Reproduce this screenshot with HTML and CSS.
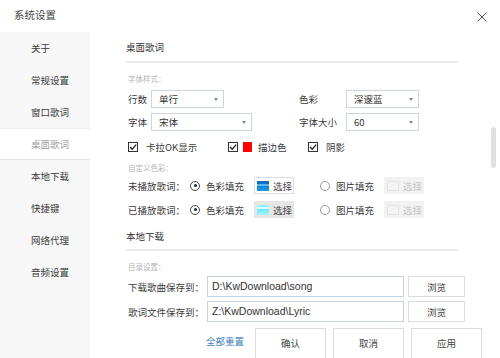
FILE: index.html
```html
<!DOCTYPE html>
<html lang="zh-CN">
<head>
<meta charset="utf-8">
<title>系统设置</title>
<link rel="stylesheet" href="styles.css">
</head>
<body>
<div class="win">
  <header class="titlebar">
    <span class="title">系统设置</span>
    <svg class="close" width="10" height="10" viewBox="0 0 10 10"><path d="M0.5 0.5 L9.5 9.5 M9.5 0.5 L0.5 9.5" stroke="#555" stroke-width="1" fill="none"/></svg>
  </header>
  <div class="body">
    <nav class="side">
      <div class="item">关于</div>
      <div class="item">常规设置</div>
      <div class="item">窗口歌词</div>
      <div class="item active">桌面歌词</div>
      <div class="item">本地下载</div>
      <div class="item">快捷键</div>
      <div class="item">网络代理</div>
      <div class="item">音频设置</div>
    </nav>
    <main class="main">
      <h2 class="sec-h">桌面歌词</h2>
      <div class="hint h1">字体样式：</div>
      <div class="row r1">
        <div class="lg"><span class="lbl">行数</span><div class="sel w73">单行<i class="arr"></i></div></div>
        <div class="rg"><span class="lbl rl">色彩</span><div class="sel w73">深邃蓝<i class="arr"></i></div></div>
      </div>
      <div class="row r2">
        <div class="lg"><span class="lbl">字体</span><div class="sel w101">宋体<i class="arr"></i></div></div>
        <div class="rg"><span class="lbl rl">字体大小</span><div class="sel w73">60<i class="arr"></i></div></div>
      </div>
      <div class="row checks">
        <div class="ck c1"><svg class="cb" width="10" height="10" viewBox="0 0 10 10"><rect x="0.5" y="0.5" width="9" height="9" fill="#fff" stroke="#333"/><path d="M2 5 L4.2 7.2 L8.2 2.6" stroke="#222" stroke-width="1.3" fill="none"/></svg><span class="ct">卡拉OK显示</span></div>
        <div class="ck c2"><svg class="cb" width="10" height="10" viewBox="0 0 10 10"><rect x="0.5" y="0.5" width="9" height="9" fill="#fff" stroke="#333"/><path d="M2 5 L4.2 7.2 L8.2 2.6" stroke="#222" stroke-width="1.3" fill="none"/></svg><span class="red"></span><span class="ct2">描边色</span></div>
        <div class="ck c3"><svg class="cb" width="10" height="10" viewBox="0 0 10 10"><rect x="0.5" y="0.5" width="9" height="9" fill="#fff" stroke="#333"/><path d="M2 5 L4.2 7.2 L8.2 2.6" stroke="#222" stroke-width="1.3" fill="none"/></svg><span class="ct">阴影</span></div>
      </div>
      <div class="hint h2">自定义色彩：</div>
      <div class="row crow cr1">
        <span class="clbl">未播放歌词：</span>
        <span class="radio on"></span><span class="rt">色彩填充</span>
        <span class="pick"><span class="sw sw1"></span>选择</span>
        <span class="radio r-2"></span><span class="rt">图片填充</span>
        <span class="pick dis"><span class="sw sw0"></span>选择</span>
      </div>
      <div class="row crow cr2">
        <span class="clbl">已播放歌词：</span>
        <span class="radio on"></span><span class="rt">色彩填充</span>
        <span class="pick act"><span class="sw sw2"></span>选择</span>
        <span class="radio r-2"></span><span class="rt">图片填充</span>
        <span class="pick dis"><span class="sw sw0"></span>选择</span>
      </div>
      <h2 class="sec-h s2">本地下载</h2>
      <div class="hint h3">目录设置：</div>
      <div class="row irow i1">
        <span class="ilbl">下载歌曲保存到：</span>
        <div class="inp">D:\KwDownload\song</div>
        <span class="btn browse">浏览</span>
      </div>
      <div class="row irow i2">
        <span class="ilbl">歌词文件保存到：</span>
        <div class="inp">Z:\KwDownload\Lyric</div>
        <span class="btn browse">浏览</span>
      </div>
      <div class="footer">
        <span class="reset">全部重置</span>
        <span class="btn fb">确认</span>
        <span class="btn fb">取消</span>
        <span class="btn fb">应用</span>
      </div>
    </main>
  </div>
  <div class="scroll"></div>
</div>
</body>
</html>
```

FILE: styles.css
```css
html, body { margin: 0; padding: 0; background: #fff; }
.win {
  width: 500px; height: 358px; overflow: hidden; position: relative;
  background: #fff; color: #3a3a3a;
  font-family: "Noto Sans CJK SC", "Liberation Sans", sans-serif;
  font-size: 9.5px; white-space: nowrap;
}
.titlebar {
  height: 32px; box-sizing: border-box;
  display: flex; justify-content: space-between; align-items: flex-start;
  padding: 7px 13px 0 14px;
}
.title { font-size: 10.5px; line-height: 16px; color: #444; }
.close { margin-top: 5px; }
.body { display: flex; height: 326px; }
.side { width: 90px; flex: none; background: #f7f7f7; }
.item { height: 32px; line-height: 32px; padding-left: 31px; box-sizing: border-box; color: #3a3a3a; }
.item.active { background: #fff; color: #a0a0a0; border-top: 1px solid #ededed; border-bottom: 1px solid #e4e4e4; line-height: 30px; }
.main { flex: 1; padding-left: 36px; display: flex; flex-direction: column; }
.sec-h {
  margin: 0; font-size: 9.5px; font-weight: normal; color: #333;
  height: 29px; line-height: 30px; width: 332px;
  border-bottom: 2px solid #e9e9e9;
}
.sec-h.s2 { margin-top: 4px; height: 27px; line-height: 28px; }
.hint { color: #b4b4b4; font-size: 7.5px; height: 16px; line-height: 16px; padding-left: 2px; }
.h1 { margin-top: 8px; }
.h2 { margin-top: 5px; }
.h3 { margin-top: 8px; }
.row { display: flex; align-items: center; padding-left: 2px; }
.r1 { margin-top: 3px; height: 18px; }
.r2 { margin-top: 5px; height: 18px; }
.lg { display: flex; align-items: center; width: 171px; }
.rg { display: flex; align-items: center; }
.lbl { width: 23px; flex: none; }
.lbl.rl { width: 47px; }
.sel {
  position: relative; box-sizing: border-box; height: 18px; line-height: 16px;
  border: 1px solid #ccd6e2; padding-left: 7px; background: #fff; color: #333; flex: none;
}
.w73 { width: 73px; }
.w101 { width: 101px; }
.arr {
  position: absolute; right: 5px; top: 7px; width: 0; height: 0;
  border-left: 2.5px solid transparent; border-right: 2.5px solid transparent;
  border-top: 3px solid #7a8896;
}
.checks { margin-top: 8px; height: 16px; }
.ck { display: flex; align-items: center; flex: none; }
.c1 { width: 100px; }
.c2 { width: 80px; }
.cb { flex: none; }
.ct { margin-left: 8px; }
.red { width: 9px; height: 10px; background: #f00; margin-left: 5px; flex: none; }
.ct2 { margin-left: 6px; }
.crow { height: 17px; }
.cr1 { margin-top: 1px; }
.cr2 { margin-top: 7px; }
.clbl { width: 62px; flex: none; }
.radio {
  width: 10px; height: 10px; box-sizing: border-box; border: 1px solid #444;
  border-radius: 50%; position: relative; flex: none; background: #fff;
}
.radio.on::after {
  content: ""; position: absolute; left: 2.5px; top: 2.5px; width: 3px; height: 3px;
  border-radius: 50%; background: #222;
}
.radio.r-2 { border-color: #999; margin-left: 26px; }
.rt { margin-left: 6px; width: 38px; flex: none; }
.pick {
  margin-left: 10px; width: 40px; height: 17px; box-sizing: border-box; flex: none;
  border: 1px solid #ddd; display: flex; align-items: center; color: #444; background: #fff;
}
.pick.act { background: #e6e6e6; border-color: #e6e6e6; }
.pick.dis { background: #f2f2f2; border-color: #f2f2f2; color: #c4c4c4; }
.sw { width: 12px; height: 10px; margin: 0 4px 0 2px; flex: none; }
.sw1 { background: linear-gradient(#0f6fbf 0, #0f6fbf 25%, #5ab8ea 25%, #5ab8ea 45%, #0a86d2 45%, #1e9ae0 100%); }
.sw2 { background: linear-gradient(#8ff3ff 0, #8ff3ff 25%, #d6fbff 25%, #d6fbff 45%, #6fe8fb 45%, #a8f4ff 100%); }
.sw0 { background: #f4f4f4; border: 1px solid #e4e4e4; box-sizing: border-box; }
.irow { height: 21px; }
.i1 { margin-top: 1px; }
.i2 { margin-top: 4px; }
.ilbl { width: 79px; flex: none; }
.inp {
  width: 197px; height: 21px; box-sizing: border-box; border: 1px solid #c3d3e2; flex: none;
  padding-left: 4px; line-height: 19px; color: #333;
  font-family: "Liberation Sans", "Noto Sans CJK SC", sans-serif; font-size: 10.5px;
}
.btn {
  display: flex; align-items: center; justify-content: center; box-sizing: border-box; flex: none;
  border: 1px solid #dcdcdc; background: #fff; color: #444;
}
.browse { width: 57px; height: 21px; margin-left: 4px; }
.footer {
  margin-top: 6px; height: 30px; display: flex; align-items: flex-start;
  justify-content: flex-end; padding-right: 18px;
}
.reset { color: #3f7fc4; margin-right: 11px; line-height: 26px; }
.fb { width: 71px; height: 32px; margin-left: 7px; padding-bottom: 2px; }
.reset + .fb { margin-left: 0; }
.scroll {
  position: absolute; left: 491px; top: 127px; width: 5px; height: 41px;
  background: #e0e0e0; border-radius: 3px;
}
```
